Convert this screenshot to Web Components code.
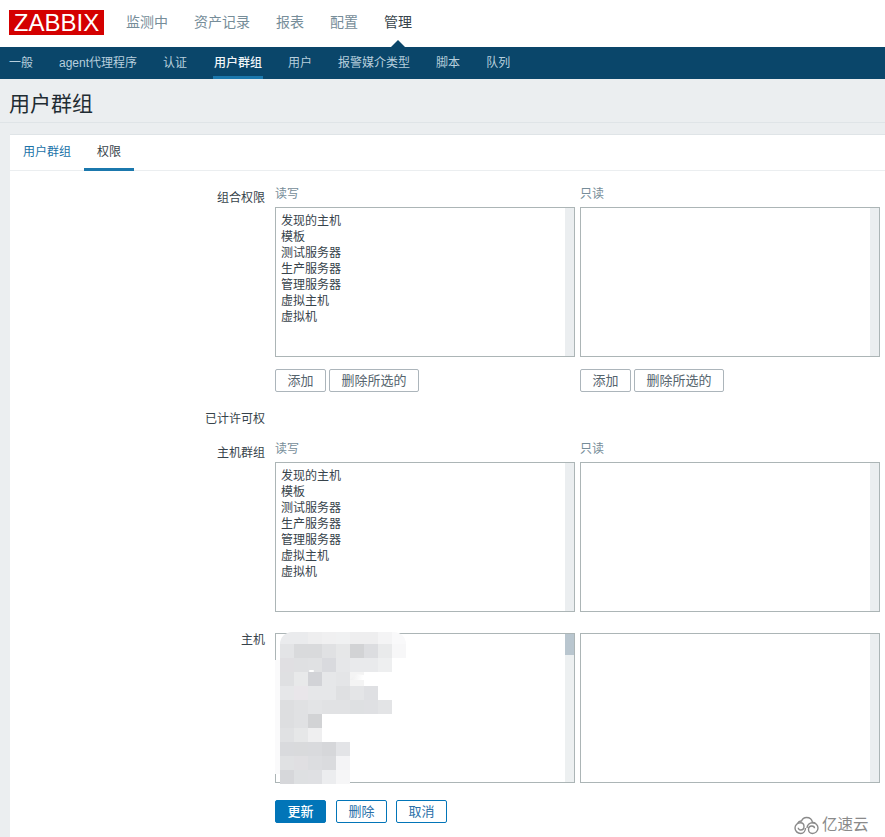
<!DOCTYPE html>
<html lang="zh">
<head>
<meta charset="utf-8">
<title>用户群组</title>
<style>
  html, body { margin: 0; height: 100%; overflow: hidden; }
  body {
    display: flex;
    flex-direction: column;
    background: #ebeef0;
    color: #37434b;
    font: 12px "Liberation Sans", "Noto Sans CJK SC", sans-serif;
  }
</style>
</head>
<body>
  <zbx-topbar active="管理"></zbx-topbar>
  <zbx-subnav active="用户群组"></zbx-subnav>
  <zbx-title>用户群组</zbx-title>
  <zbx-card>
    <zbx-tabs active="权限"></zbx-tabs>
    <zbx-row label="组合权限">
      <zbx-perm-pair headed buttons></zbx-perm-pair>
    </zbx-row>
    <zbx-row label="已计许可权"></zbx-row>
    <zbx-row label="主机群组">
      <zbx-perm-pair headed></zbx-perm-pair>
    </zbx-row>
    <zbx-row label="主机" flush style="margin-top:6px">
      <zbx-perm-pair hosts></zbx-perm-pair>
    </zbx-row>
    <zbx-row style="margin-top:2px">
      <zbx-actions></zbx-actions>
    </zbx-row>
  </zbx-card>
  <zbx-watermark></zbx-watermark>

<script>
const GROUPS = ['发现的主机', '模板', '测试服务器', '生产服务器', '管理服务器', '虚拟主机', '虚拟机'];

// Blurred host names in the reference, one row of grey cells per line
const MOSAIC = [
  ['eaebed', 'eaebed', 'eeeeef', 'f0f0f1', 'f0f1f2', 'eeeeef', 'eeeeef', 'f4f4f5', 'f9f9fa'],
  ['e3e4e6', 'd9dadc', 'd9dadc', 'e0e1e3', 'e6e7e8', 'd2d3d5', 'dcdde0', 'e9eaeb', 'f7f7f8'],
  ['e0dfe2', 'dfe0e2', 'e0e1e3', 'd9dade', 'e6e7e9', 'e9eaec', 'e9eaec', 'eeeff0'],
  ['dfe0e2', 'e8e9ea', 'd2d3d7', 'e6e7e9', 'e4e5e7', 'f4f4f4'],
  ['e6e7e9', 'e9e6ea', 'e6e7e9', 'e6e7e9', 'dfe0e2', 'e4e5e7', 'dfe0e3'],
  ['dddee0', 'e0e1e3', 'e3e4e6', 'e1e2e4', 'e1e2e4', 'dee0e2', 'dfe0e3', 'e3e4e6'],
  ['dddee0', 'e0e1e3', 'd2d3d5'],
  ['e0e1e3', 'e6e7e8', 'efeff0'],
  ['d9dadd', 'd9dadc', 'd9dadd', 'd6d7da', 'e3e4e7'],
  ['e0e1e3', 'e0dfe2', 'dcdde0', 'dadbde', 'f4f4f6'],
  ['d6d7da', 'dee0e2', 'dfe0e3', 'ecedef', 'f6f6f7']
];

class ZbxTopbar extends HTMLElement {
  constructor() {
    super();
    this.attachShadow({ mode: 'open' });
    this.shadowRoot.innerHTML = `
      <style>
        :host { display: flex; align-items: center; height: 47px; background: #fff; padding: 0 0 2px 9px; box-sizing: border-box; flex: none; }
        .logo { width: 95px; height: 25px; background: #d40000; color: #fff; font-size: 24px; line-height: 26px; text-align: center; margin-right: 22px; }
        nav { display: flex; gap: 26px; font-size: 14px; line-height: 18px; color: #768d99; }
        span { position: relative; display: block; height: 20px; }
        .on { color: #37434b; }
        .on::after { content: ""; position: absolute; left: 6px; top: 27px; border: 8px solid transparent; border-top: 0; border-bottom-color: #0a466a; }
      </style>
      <div class="logo">ZABBIX</div>
      <nav></nav>
    `;
  }

  connectedCallback() {
    const nav = this.shadowRoot.querySelector('nav');
    for (const name of ['监测中', '资产记录', '报表', '配置', '管理']) {
      const item = document.createElement('span');
      item.textContent = name;
      if (name === this.getAttribute('active')) item.className = 'on';
      nav.appendChild(item);
    }
  }
}

class ZbxSubnav extends HTMLElement {
  constructor() {
    super();
    this.attachShadow({ mode: 'open' });
    this.shadowRoot.innerHTML = `
      <style>
        :host { display: flex; gap: 26px; height: 32px; padding-left: 9px; background: #0a466a; color: #b7cfdd; line-height: 33px; flex: none; }
        span { position: relative; }
        .pad { padding-right: 1px; }
        .on { color: #f2f6f9; font-weight: 500; }
        .on::after { content: ""; position: absolute; left: -1px; right: -1px; bottom: 0; height: 3px; background: #1b78ad; }
      </style>
    `;
  }

  connectedCallback() {
    for (const name of ['一般', 'agent代理程序', '认证', '用户群组', '用户', '报警媒介类型', '脚本', '队列']) {
      const item = document.createElement('span');
      item.textContent = name;
      if (name === this.getAttribute('active')) item.className = 'on';
      if (name === '认证') item.className = 'pad';
      this.shadowRoot.appendChild(item);
    }
  }
}

class ZbxTitle extends HTMLElement {
  constructor() {
    super();
    this.attachShadow({ mode: 'open' });
    this.shadowRoot.innerHTML = `
      <style>
        :host { display: block; height: 43px; margin-bottom: 11px; padding-left: 9px; border-bottom: 1px solid #dfe4e7; font-size: 21px; line-height: 50px; color: #1f2c33; flex: none; }
      </style>
      <slot></slot>
    `;
  }
}

class ZbxCard extends HTMLElement {
  constructor() {
    super();
    this.attachShadow({ mode: 'open' });
    this.shadowRoot.innerHTML = `
      <style>
        :host { display: flex; flex-direction: column; gap: 15px; flex: 1; margin-left: 10px; background: #fff; border-top: 1px solid #dfe4e7; }
      </style>
      <slot></slot>
    `;
  }
}

class ZbxTabs extends HTMLElement {
  constructor() {
    super();
    this.attachShadow({ mode: 'open' });
    this.shadowRoot.innerHTML = `
      <style>
        :host { display: flex; height: 35px; padding-left: 1px; border-bottom: 1px solid #ebeef0; line-height: 34px; }
        span { position: relative; padding: 0 12px; color: #1a72a8; }
        span + span { margin-left: 1px; }
        .on { color: #37434b; padding: 0 13px; }
        .on::after { content: ""; position: absolute; left: 0; right: 0; bottom: -1px; height: 3px; background: #1b78ad; }
      </style>
    `;
  }

  connectedCallback() {
    for (const name of ['用户群组', '权限']) {
      const item = document.createElement('span');
      item.textContent = name;
      if (name === this.getAttribute('active')) item.className = 'on';
      this.shadowRoot.appendChild(item);
    }
  }
}

class ZbxRow extends HTMLElement {
  constructor() {
    super();
    this.attachShadow({ mode: 'open' });
    this.shadowRoot.innerHTML = `
      <style>
        :host { display: grid; grid-template-columns: 255px 1fr; column-gap: 10px; }
        label { display: block; text-align: right; padding-top: 5px; line-height: 14px; min-height: 14px; }
        :host([flush]) label { padding-top: 0; }
      </style>
      <label></label>
      <div><slot></slot></div>
    `;
  }

  connectedCallback() {
    this.shadowRoot.querySelector('label').textContent = this.getAttribute('label') || '';
  }
}

class ZbxPermPair extends HTMLElement {
  constructor() {
    super();
    this.attachShadow({ mode: 'open' });
  }

  connectedCallback() {
    const headed = this.hasAttribute('headed');
    const column = (title, filled) => `
      <div class="col">
        ${headed ? `<div class="head">${title}</div>` : ''}
        <zbx-listbox ${this.hasAttribute('hosts') ? (filled ? 'hosts' : 'blank') : ''}>
          ${filled && headed ? GROUPS.map(name => `<div>${name}</div>`).join('') : ''}
        </zbx-listbox>
        ${this.hasAttribute('buttons') ? `
          <div class="btns">
            <zbx-btn style="width:51px">添加</zbx-btn>
            <zbx-btn style="width:90px">删除所选的</zbx-btn>
          </div>` : ''}
      </div>
    `;
    this.shadowRoot.innerHTML = `
      <style>
        :host { display: flex; gap: 5px; }
        .col { width: 300px; }
        .head { height: 14px; line-height: 16px; margin-bottom: 7px; color: #768d99; }
        .btns { display: flex; gap: 3px; margin-top: 12px; }
      </style>
      ${column('读写', true)}
      ${column('只读', false)}
    `;
  }
}

class ZbxListbox extends HTMLElement {
  constructor() {
    super();
    this.attachShadow({ mode: 'open' });
    this.shadowRoot.innerHTML = `
      <style>
        :host { display: block; position: relative; height: 150px; box-sizing: border-box; border: 1px solid #acb5b6; padding: 5px 14px 0 5px; line-height: 16px; color: #37434b; background: #fff; }
        .track { position: absolute; top: 0; right: 0; bottom: 0; width: 9px; background: #ebeef0; }
        .thumb { display: none; height: 21px; background: #b9c6cf; }
        :host([hosts]) .thumb { display: block; }
        :host([hosts]) .track { background: #edf0f1; }
        zbx-mosaic { display: none; }
        :host([hosts]) zbx-mosaic { display: grid; }
      </style>
      <slot></slot>
      <zbx-mosaic></zbx-mosaic>
      <div class="track"><div class="thumb"></div></div>
    `;
  }
}

class ZbxMosaic extends HTMLElement {
  constructor() {
    super();
    this.attachShadow({ mode: 'open' });
    this.shadowRoot.innerHTML = `
      <style>
        :host { position: absolute; left: 4px; top: -2px; grid-template-columns: repeat(9, 14px); grid-template-rows: 12px repeat(10, 14px); }
        i { display: block; }
        i.tl { border-top-left-radius: 12px; }
        i.tr { border-top-right-radius: 12px; }
        /* faint smear round the blur, and the bits the brush missed */
        .halo { position: absolute; left: -5px; top: 28px; bottom: 10px; width: 5px; background: #fafafb; }
        .speck { position: absolute; left: 29px; top: 38px; width: 5px; height: 2px; background: #fff; border-radius: 1px; }
        .wedge { position: absolute; left: 70px; top: 42px; width: 30px; height: 6px; background: linear-gradient(100deg, #eee 0, #fff 45%); clip-path: polygon(22% 0, 100% 60%, 100% 100%, 0 100%); }
      </style>
      <div class="halo"></div>
      <div class="speck"></div>
      <div class="wedge"></div>
    `;
  }

  connectedCallback() {
    MOSAIC.forEach((row, r) => {
      for (let c = 0; c < 9; c++) {
        const cell = document.createElement('i');
        cell.style.background = row[c] ? '#' + row[c] : 'transparent';
        if (r === 0 && c === 0) cell.className = 'tl';
        if (r === 0 && c === 8) cell.className = 'tr';
        this.shadowRoot.insertBefore(cell, this.shadowRoot.querySelector('.halo'));
      }
    });
  }
}

class ZbxBtn extends HTMLElement {
  constructor() {
    super();
    this.attachShadow({ mode: 'open' });
    this.shadowRoot.innerHTML = `
      <style>
        :host { display: block; height: 23px; box-sizing: border-box; border: 1px solid #acb5bb; border-radius: 2px; font-size: 13px; line-height: 21px; text-align: center; color: #55646d; background: #fff; }
        :host([kind="primary"]) { background: #0275b8; border-color: #0275b8; color: #fff; font-weight: 500; }
        :host([kind="outline"]) { border-color: #0275b8; color: #2a6fa8; }
      </style>
      <slot></slot>
    `;
  }
}

class ZbxActions extends HTMLElement {
  constructor() {
    super();
    this.attachShadow({ mode: 'open' });
    this.shadowRoot.innerHTML = `
      <style>
        :host { display: flex; gap: 10px; }
        zbx-btn { width: 51px; }
        zbx-btn:last-child { margin-left: -1px; }
      </style>
      <zbx-btn kind="primary">更新</zbx-btn>
      <zbx-btn kind="outline">删除</zbx-btn>
      <zbx-btn kind="outline">取消</zbx-btn>
    `;
  }
}

class ZbxWatermark extends HTMLElement {
  constructor() {
    super();
    this.attachShadow({ mode: 'open' });
    this.shadowRoot.innerHTML = `
      <style>
        :host { position: absolute; left: 794px; top: 815px; display: flex; align-items: center; gap: 3px; color: #8a8a8a; font-size: 15.5px; line-height: 20px; }
        svg { display: block; }
      </style>
      <svg width="25" height="19" viewBox="0 0 25 19" fill="none" stroke="#8a8a8a" stroke-width="1.4">
        <path d="M3.500 7.500C4.500 5.500 6 4.800 7.500 5C8.500 2.500 10.500 1.500 12.500 1.500C15.500 1.500 18 3.500 18.500 6.500C19.500 6.300 20.500 6.600 21.300 7.300"/>
        <path d="M11.500 12C11.500 15 9.500 17.500 6.700 17.500C3.500 17.500 1 15 1 12C1 9 3.500 6.700 6.500 6.700C8.500 6.700 10 8.300 10 10.500C10 12.500 8.500 14 6.700 14C5.300 14 4.300 13 4.300 11.800"/>
        <path d="M13 12C13 9 15.500 6.700 18.500 6.700C21.500 6.700 24 9 24 12C24 15 21.500 17.500 18.500 17.500C16 17.500 14.500 15.500 14.500 13.500C14.500 11.500 16 10 17.800 10C19.500 10 20.500 11 20.500 12.300"/>
      </svg>
      <span>亿速云</span>
    `;
  }
}

customElements.define('zbx-topbar', ZbxTopbar);
customElements.define('zbx-subnav', ZbxSubnav);
customElements.define('zbx-title', ZbxTitle);
customElements.define('zbx-card', ZbxCard);
customElements.define('zbx-tabs', ZbxTabs);
customElements.define('zbx-row', ZbxRow);
customElements.define('zbx-perm-pair', ZbxPermPair);
customElements.define('zbx-listbox', ZbxListbox);
customElements.define('zbx-mosaic', ZbxMosaic);
customElements.define('zbx-btn', ZbxBtn);
customElements.define('zbx-actions', ZbxActions);
customElements.define('zbx-watermark', ZbxWatermark);
</script>
</body>
</html>
